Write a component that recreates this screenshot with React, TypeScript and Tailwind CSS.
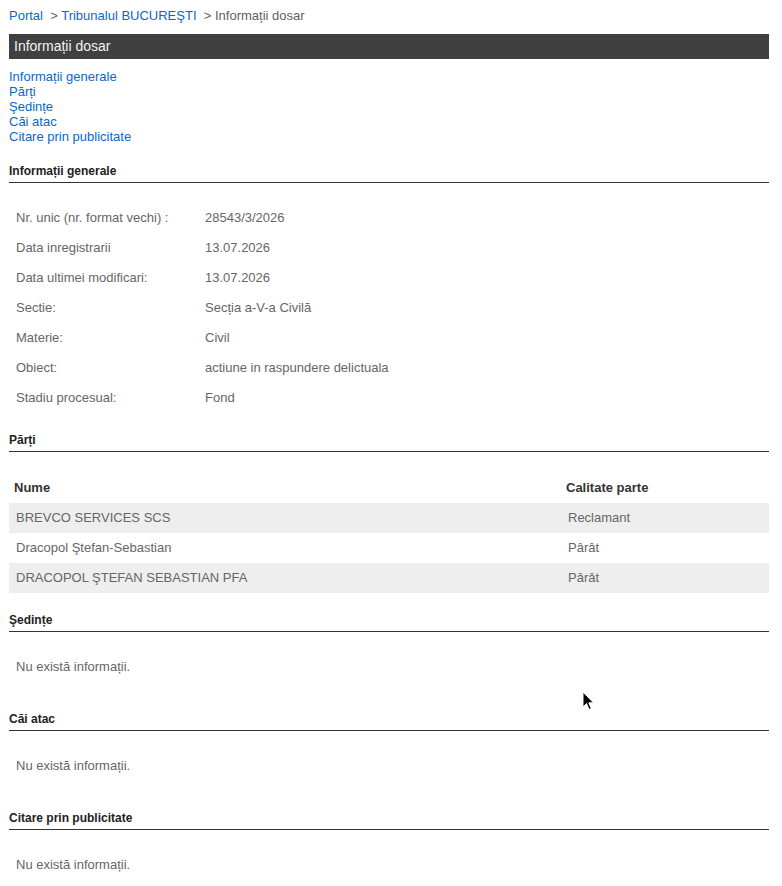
import React from "react";

const info: [string, string][] = [
  ["Nr. unic (nr. format vechi) :", "28543/3/2026"],
  ["Data inregistrarii", "13.07.2026"],
  ["Data ultimei modificari:", "13.07.2026"],
  ["Sectie:", "Secția a-V-a Civilă"],
  ["Materie:", "Civil"],
  ["Obiect:", "actiune in raspundere delictuala"],
  ["Stadiu procesual:", "Fond"],
];

const parti: [string, string][] = [
  ["BREVCO SERVICES SCS", "Reclamant"],
  ["Dracopol Ştefan-Sebastian", "Pârât"],
  ["DRACOPOL ŞTEFAN SEBASTIAN PFA", "Pârât"],
];

function Heading({ children, className = "" }: { children: React.ReactNode; className?: string }) {
  return (
    <div className={"text-[12px] font-bold leading-[15px] text-[#222] pb-[3px] border-b border-[#333] " + className}>
      {children}
    </div>
  );
}

function Empty() {
  return <div className="mt-[20px] h-[30px] flex items-center pl-[7px] text-[13px] text-[#666]">Nu există informații.</div>;
}

export default function App() {
  return (
    <div className="relative min-h-[886px] bg-white px-[9px] pt-[8px] pb-[14px] w-[778px]" style={{ fontFamily: '"Liberation Sans", Arial, sans-serif' }}>
      <div className="text-[13px] leading-[16px] text-[#5f5f5f] whitespace-pre">
        <span className="text-[#0a68c8]">Portal</span>
        {"  > "}
        <span className="text-[#0a68c8]">Tribunalul BUCUREŞTI</span>
        {"  > Informații dosar"}
      </div>
      <div className="mt-[10px] h-[25px] bg-[#404040] text-[#f2f2f2] text-[14px] flex items-center pl-[5px]">Informații dosar</div>
      <div className="mt-[10px] flex flex-col text-[13px] leading-[15px] text-[#0a68c8]">
        <span>Informații generale</span>
        <span>Părți</span>
        <span>Şedințe</span>
        <span>Căi atac</span>
        <span>Citare prin publicitate</span>
      </div>

      <Heading className="mt-[20px]">Informații generale</Heading>
      <div className="mt-[20px] flex flex-col">
        {info.map(([k, v]) => (
          <div key={k} className="grid grid-cols-[196px_1fr] h-[30px] items-center text-[13px] text-[#666]">
            <span className="pl-[7px]">{k}</span>
            <span>{v}</span>
          </div>
        ))}
      </div>

      <Heading className="mt-[20px]">Părți</Heading>
      <div className="mt-[21px] flex flex-col">
        <div className="grid grid-cols-[552px_1fr] h-[30px] items-center text-[13px] font-bold text-[#333]">
          <span className="pl-[5px]">Nume</span>
          <span className="pl-[5px]">Calitate parte</span>
        </div>
        {parti.map(([n, c], i) => (
          <div key={n} className={"grid grid-cols-[552px_1fr] h-[30px] items-center text-[13px] text-[#666] " + (i % 2 === 0 ? "bg-[#eeeeee]" : "")}>
            <span className="pl-[7px]">{n}</span>
            <span className="pl-[7px]">{c}</span>
          </div>
        ))}
      </div>

      <Heading className="mt-[20px]">Şedințe</Heading>
      <Empty />
      <Heading className="mt-[30px]">Căi atac</Heading>
      <Empty />
      <Heading className="mt-[30px]">Citare prin publicitate</Heading>
      <Empty />

      <svg className="absolute left-[582px] top-[691px]" width="14" height="22" viewBox="0 0 14 22">
        <path d="M1 1 L1 16 L4.5 12.5 L7 18.5 L9.3 17.5 L6.8 11.8 L11.5 11.8 Z" fill="#000" stroke="#fff" strokeWidth="1" strokeLinejoin="round" />
      </svg>
    </div>
  );
}
